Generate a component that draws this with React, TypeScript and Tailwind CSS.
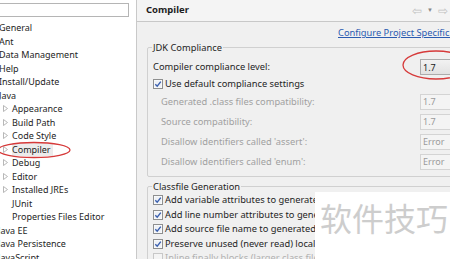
import React from "react";

const font = { fontFamily: '"Noto Sans", "Open Sans", Arial, sans-serif' };

function Check({ on = true, disabled = false }: { on?: boolean; disabled?: boolean }) {
  return (
    <svg width="10" height="10" viewBox="0 0 10 10" className="shrink-0">
      <rect x="0.5" y="0.5" width="9" height="9" fill={disabled ? "#f4f4f4" : "#fff"} stroke={disabled ? "#c8c8c8" : "#8e8f8f"} />
      <rect x="1.5" y="1.5" width="7" height="7" fill={disabled ? "#f4f4f4" : "#eef1f5"} />
      {on && <path d="M2.3 5.2 L4.2 7.2 L7.8 2.6" fill="none" stroke="#3a5fae" strokeWidth="1.4" />}
    </svg>
  );
}

function Tri() {
  return (
    <svg width="5" height="7" viewBox="0 0 5 7" className="shrink-0">
      <path d="M0.5 0.5 L4.5 3.5 L0.5 6.5 Z" fill="none" stroke="#a6a6a6" strokeWidth="0.8" />
    </svg>
  );
}

const top = ["General", "Ant", "Data Management", "Help", "Install/Update", "Java"];
const kids: [string, boolean][] = [
  ["Appearance", true],
  ["Build Path", true],
  ["Code Style", true],
  ["Compiler", true],
  ["Debug", true],
  ["Editor", true],
  ["Installed JREs", true],
  ["JUnit", false],
  ["Properties Files Editor", false],
];
const after = ["Java EE", "Java Persistence", "JavaScript"];

function Field({ v, active = false }: { v: string; active?: boolean }) {
  return (
    <div
      className={`w-[60px] h-[16px] border pl-[2px] flex items-center text-[9px] ${
        active ? "border-[#acacac] bg-gradient-to-b from-[#f2f2f2] to-[#e2e2e2] text-[#222]" : "border-[#d4d4d4] bg-[#f4f4f4] text-[#9a9a9a]"
      }`}
    >
      {v}
    </div>
  );
}

export default function App() {
  return (
    <div className="w-[450px] h-[259px] overflow-hidden flex relative text-[9.3px] text-[#1e1e1e]" style={font}>
      {/* Left tree */}
      <div className="w-[137px] shrink-0 bg-white border-r border-[#c9c9c9] relative text-[9px]">
        <div className="mt-[3px] ml-[-2px] w-[131px] h-[14px] border border-[#b5b5b5] bg-white" />
        <div className="mt-[4px]">
          {top.map((t) => (
            <div key={t} className="h-[13.5px] flex items-center ml-[-1px] whitespace-nowrap">
              {t}
            </div>
          ))}
          {kids.map(([t, arrow]) => (
            <div key={t} className="h-[13.5px] flex items-center pl-[3px] whitespace-nowrap">
              <div className="w-[9px] flex">{arrow && <Tri />}</div>
              <span className={t === "Compiler" ? "bg-[#ececec] pr-[2px]" : ""}>{t}</span>
            </div>
          ))}
          {after.map((t) => (
            <div key={t} className="h-[13.5px] flex items-center ml-[-2px] whitespace-nowrap">
              {t}
            </div>
          ))}
        </div>
        <svg className="absolute left-0 top-0" width="137" height="259">
          <ellipse cx="34" cy="150" rx="36" ry="7.5" fill="none" stroke="#d63a3a" strokeWidth="1.3" />
        </svg>
      </div>

      {/* Right panel */}
      <div className="flex-1 bg-[#f0f0f0] flex flex-col min-w-0">
        <div className="h-[22px] shrink-0 flex items-center justify-between border-b border-[#c8c8c8] bg-[#f4f4f4] pl-[9px]">
          <span className="font-bold text-[9.5px]">Compiler</span>
          <div className="flex items-center gap-[5px] text-[#c2c2c2] text-[12px] mr-[-9px]">
            <span>⇦</span>
            <span className="text-[6px] text-[#888]">▼</span>
            <span>⇨</span>
            <span className="text-[6px] text-[#888]">▼</span>
          </div>
        </div>
        <div className="pl-[201px] mt-[4px] whitespace-nowrap">
          <span className="text-[#2a5bb0] underline">Configure Project Specific Settings...</span>
        </div>

        <fieldset className="ml-[10px] mt-[2px] w-[340px] border border-[#d0d0d0] rounded-[2px] pl-[5px] pr-0 pb-[4px] shrink-0">
          <legend className="px-[1px] ml-[-1px] leading-[12px]">JDK Compliance</legend>
          <div className="flex items-center h-[17px] mt-[5px]">
            <span className="w-[267px] whitespace-nowrap">Compiler compliance level:</span>
            <Field v="1.7" active />
          </div>
          <div className="flex items-center gap-[2px] h-[16px] whitespace-nowrap">
            <Check />
            <span>Use default compliance settings</span>
          </div>
          <div className="pl-[8px] text-[#a0a0a0]">
            {[
              ["Generated .class files compatibility:", "1.7"],
              ["Source compatibility:", "1.7"],
              ["Disallow identifiers called 'assert':", "Error"],
              ["Disallow identifiers called 'enum':", "Error"],
            ].map(([l, v]) => (
              <div key={l} className="flex items-center h-[20px] whitespace-nowrap">
                <span className="w-[259px]">{l}</span>
                <Field v={v} />
              </div>
            ))}
          </div>
        </fieldset>

        <fieldset className="ml-[10px] mt-[4px] w-[340px] border border-[#d0d0d0] rounded-[2px] pl-[5px] shrink-0">
          <legend className="px-[1px] ml-[-1px] leading-[12px]">Classfile Generation</legend>
          {[
            "Add variable attributes to generated class files (used by the debugger)",
            "Add line number attributes to generated class files (used by the debugger)",
            "Add source file name to generated class file (used by the debugger)",
            "Preserve unused (never read) local variables",
          ].map((t) => (
            <div key={t} className="flex items-center gap-[2px] h-[14.5px] whitespace-nowrap">
              <Check />
              <span>{t}</span>
            </div>
          ))}
          <div className="flex items-center gap-[2px] h-[14.5px] whitespace-nowrap text-[#b0b0b0]">
            <Check on={false} disabled />
            <span>Inline finally blocks (larger class files, but improved performance)</span>
          </div>
        </fieldset>
      </div>

      {/* Red highlight on compliance combo */}
      <svg className="absolute left-[400px] top-[48px]" width="60" height="34">
        <ellipse cx="36" cy="17" rx="33" ry="14" fill="none" stroke="#d63a3a" strokeWidth="1.3" />
      </svg>

      {/* Watermark */}
      <div className="absolute left-[315px] top-[192px] w-[135px] h-[67px] bg-white flex items-start pt-[5px] pl-[5px]">
        <span
          className="text-[32px] leading-[40px] text-[#cdcdcd] whitespace-nowrap"
          style={{ fontFamily: '"Noto Sans CJK SC", sans-serif' }}
        >
          软件技巧
        </span>
      </div>
    </div>
  );
}
